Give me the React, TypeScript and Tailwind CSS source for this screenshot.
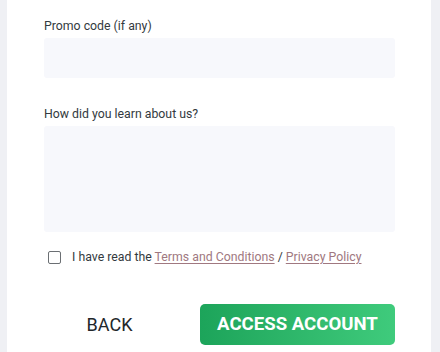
export default function App() {
  return (
    <div
      className="h-[352px] w-[440px] overflow-hidden bg-[#eff0f4] pl-[7px] pr-[9px]"
      style={{ fontFamily: "Roboto, 'Liberation Sans', sans-serif" }}
    >
      <div className="h-full bg-white pl-[37px] pr-[36px] pt-[18px]">
        {/* Promo code */}
        <label className="mb-1 block text-[12.3px] leading-4 text-[#333a40]">
          Promo code (if any)
        </label>
        <input
          type="text"
          className="block h-10 w-full rounded-[3px] bg-[#f7f8fc] px-3 text-sm outline-none"
        />

        {/* How did you learn */}
        <label className="mb-1 mt-7 block text-[12.3px] leading-4 text-[#333a40]">
          How did you learn about us?
        </label>
        <textarea className="block h-[106px] w-full resize-none rounded-[3px] bg-[#f7f8fc] px-3 py-2 text-sm outline-none" />

        {/* Terms */}
        <div className="mt-[15px] flex h-5 items-center pl-1">
          <span className="h-[13px] w-[13px] rounded-[2px] border-[1.5px] border-[#6b6f73] bg-white" />
          <span className="ml-[11px] text-[12.3px] text-[#333a40]">
            I have read the{" "}
            <a className="text-[#a07880] underline underline-offset-2">
              Terms and Conditions
            </a>{" "}
            /{" "}
            <a className="text-[#a07880] underline underline-offset-2">
              Privacy Policy
            </a>
          </span>
        </div>

        {/* Actions */}
        <div className="mt-[37px] flex items-center">
          <button className="flex h-[41px] w-[131px] items-center justify-center text-lg text-[#22272b]">
            BACK
          </button>
          <button className="ml-[25px] flex h-[41px] w-[195px] items-center justify-center rounded-[5px] bg-gradient-to-r from-[#1ca45a] to-[#3fcb7c] text-[18.6px] font-bold text-white">
            ACCESS ACCOUNT
          </button>
        </div>
      </div>
    </div>
  );
}
